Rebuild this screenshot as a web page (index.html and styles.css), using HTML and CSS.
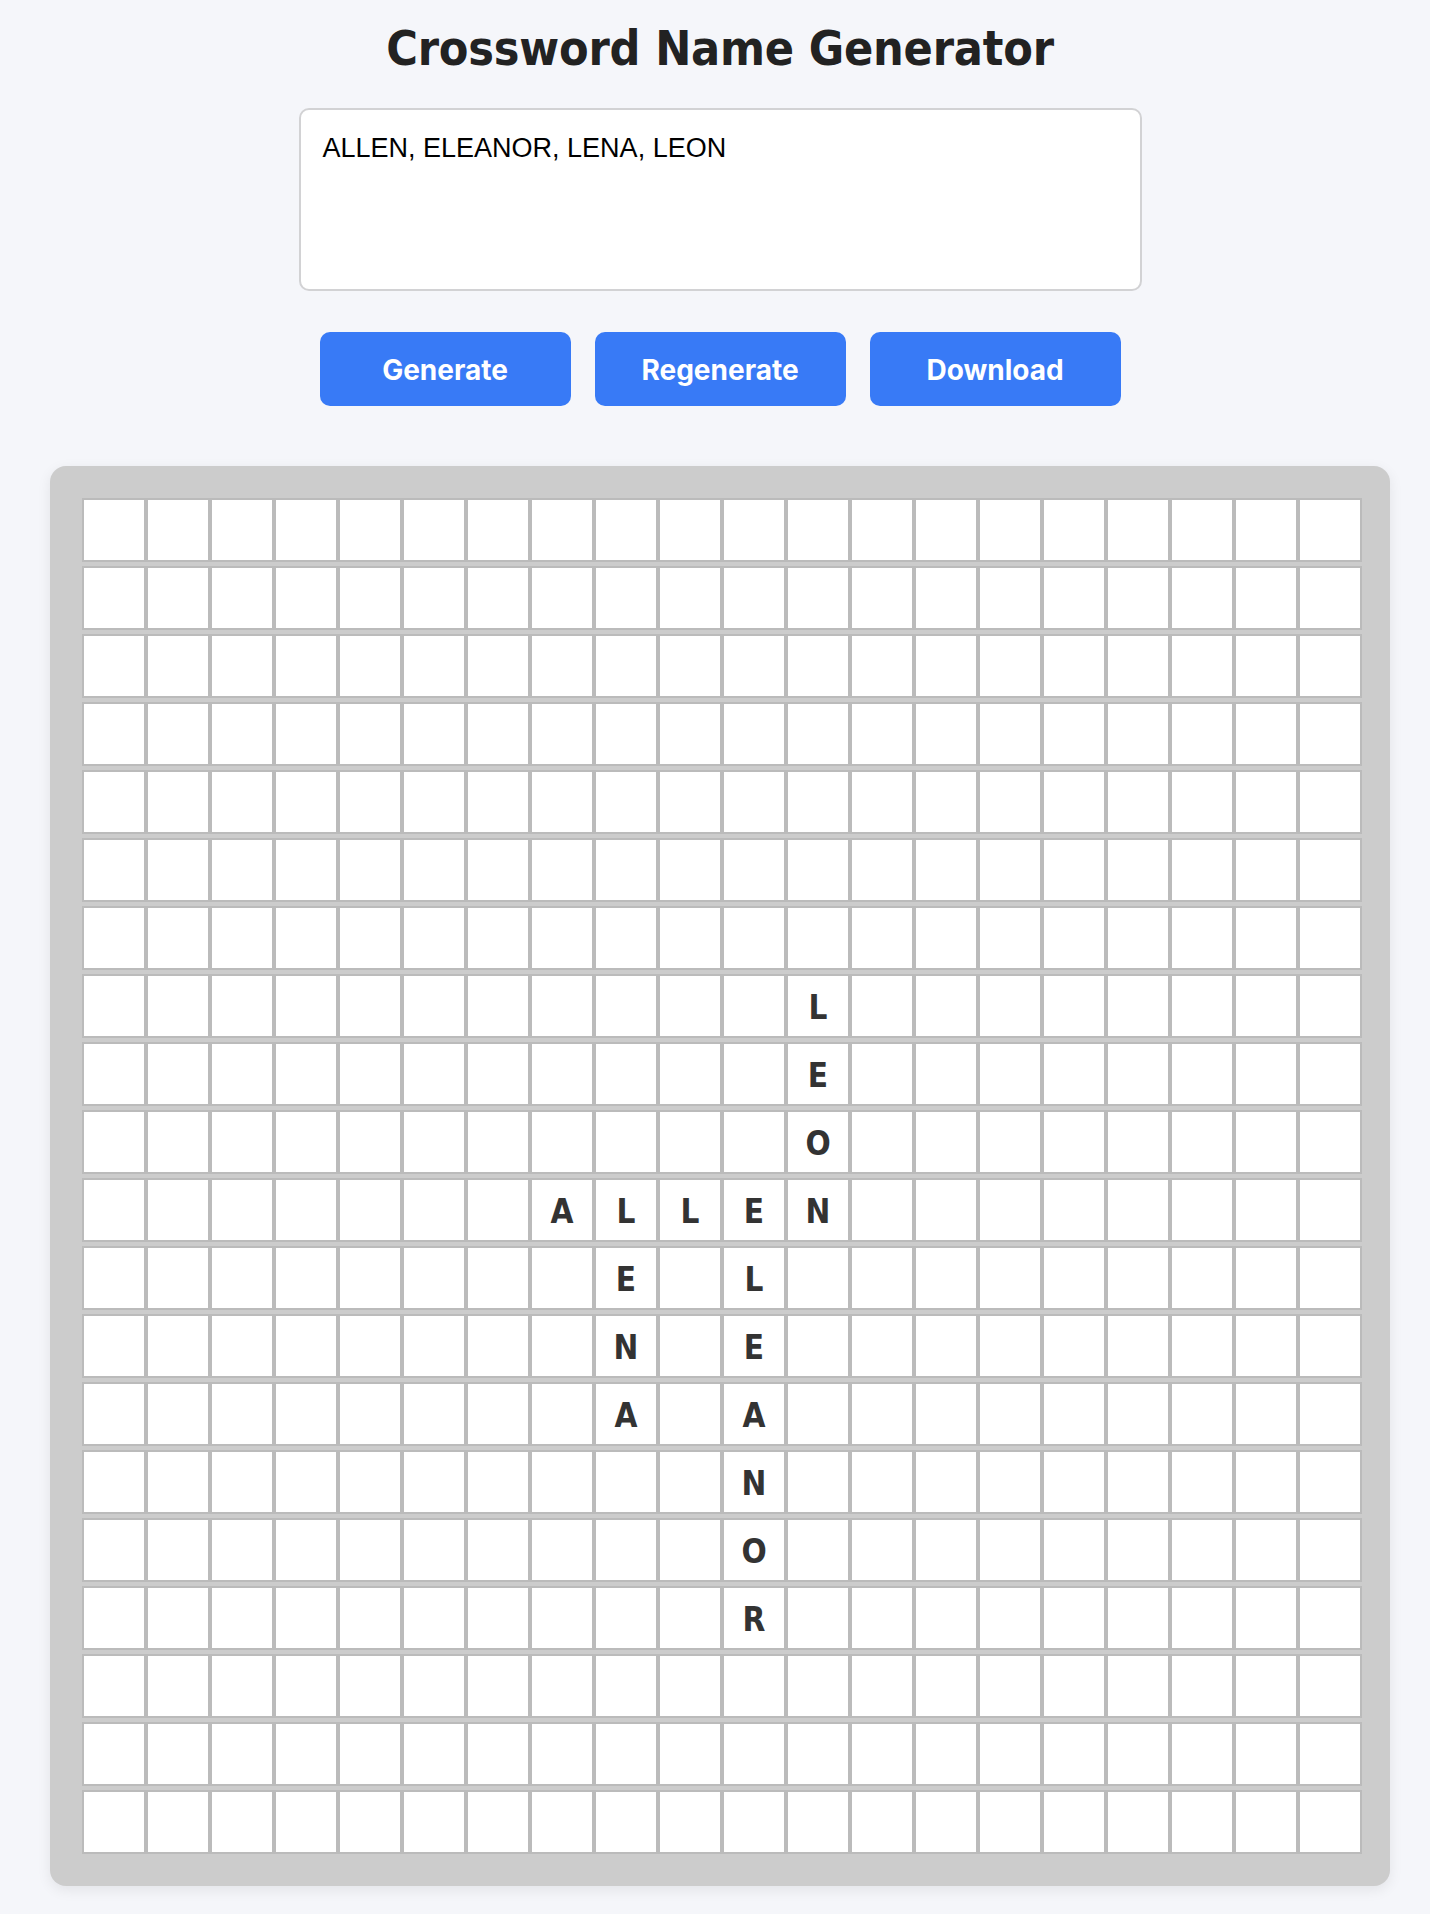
FILE: index.html
```html
<!DOCTYPE html>
<html lang="en">
<head>
<meta charset="utf-8">
<title>Crossword Name Generator</title>
<link rel="stylesheet" href="styles.css">
</head>
<body>
<main class="page">
  <h1 class="title">Crossword Name Generator</h1>
  <textarea class="names">ALLEN, ELEANOR, LENA, LEON</textarea>
  <div class="actions">
    <button class="btn">Generate</button>
    <button class="btn">Regenerate</button>
    <button class="btn">Download</button>
  </div>
  <section class="board">
    <div class="grid">
      <div class="row"><div class="c"></div><div class="c"></div><div class="c"></div><div class="c"></div><div class="c"></div><div class="c"></div><div class="c"></div><div class="c"></div><div class="c"></div><div class="c"></div><div class="c"></div><div class="c"></div><div class="c"></div><div class="c"></div><div class="c"></div><div class="c"></div><div class="c"></div><div class="c"></div><div class="c"></div><div class="c"></div></div>
      <div class="row"><div class="c"></div><div class="c"></div><div class="c"></div><div class="c"></div><div class="c"></div><div class="c"></div><div class="c"></div><div class="c"></div><div class="c"></div><div class="c"></div><div class="c"></div><div class="c"></div><div class="c"></div><div class="c"></div><div class="c"></div><div class="c"></div><div class="c"></div><div class="c"></div><div class="c"></div><div class="c"></div></div>
      <div class="row"><div class="c"></div><div class="c"></div><div class="c"></div><div class="c"></div><div class="c"></div><div class="c"></div><div class="c"></div><div class="c"></div><div class="c"></div><div class="c"></div><div class="c"></div><div class="c"></div><div class="c"></div><div class="c"></div><div class="c"></div><div class="c"></div><div class="c"></div><div class="c"></div><div class="c"></div><div class="c"></div></div>
      <div class="row"><div class="c"></div><div class="c"></div><div class="c"></div><div class="c"></div><div class="c"></div><div class="c"></div><div class="c"></div><div class="c"></div><div class="c"></div><div class="c"></div><div class="c"></div><div class="c"></div><div class="c"></div><div class="c"></div><div class="c"></div><div class="c"></div><div class="c"></div><div class="c"></div><div class="c"></div><div class="c"></div></div>
      <div class="row"><div class="c"></div><div class="c"></div><div class="c"></div><div class="c"></div><div class="c"></div><div class="c"></div><div class="c"></div><div class="c"></div><div class="c"></div><div class="c"></div><div class="c"></div><div class="c"></div><div class="c"></div><div class="c"></div><div class="c"></div><div class="c"></div><div class="c"></div><div class="c"></div><div class="c"></div><div class="c"></div></div>
      <div class="row"><div class="c"></div><div class="c"></div><div class="c"></div><div class="c"></div><div class="c"></div><div class="c"></div><div class="c"></div><div class="c"></div><div class="c"></div><div class="c"></div><div class="c"></div><div class="c"></div><div class="c"></div><div class="c"></div><div class="c"></div><div class="c"></div><div class="c"></div><div class="c"></div><div class="c"></div><div class="c"></div></div>
      <div class="row"><div class="c"></div><div class="c"></div><div class="c"></div><div class="c"></div><div class="c"></div><div class="c"></div><div class="c"></div><div class="c"></div><div class="c"></div><div class="c"></div><div class="c"></div><div class="c"></div><div class="c"></div><div class="c"></div><div class="c"></div><div class="c"></div><div class="c"></div><div class="c"></div><div class="c"></div><div class="c"></div></div>
      <div class="row"><div class="c"></div><div class="c"></div><div class="c"></div><div class="c"></div><div class="c"></div><div class="c"></div><div class="c"></div><div class="c"></div><div class="c"></div><div class="c"></div><div class="c"></div><div class="c">L</div><div class="c"></div><div class="c"></div><div class="c"></div><div class="c"></div><div class="c"></div><div class="c"></div><div class="c"></div><div class="c"></div></div>
      <div class="row"><div class="c"></div><div class="c"></div><div class="c"></div><div class="c"></div><div class="c"></div><div class="c"></div><div class="c"></div><div class="c"></div><div class="c"></div><div class="c"></div><div class="c"></div><div class="c">E</div><div class="c"></div><div class="c"></div><div class="c"></div><div class="c"></div><div class="c"></div><div class="c"></div><div class="c"></div><div class="c"></div></div>
      <div class="row"><div class="c"></div><div class="c"></div><div class="c"></div><div class="c"></div><div class="c"></div><div class="c"></div><div class="c"></div><div class="c"></div><div class="c"></div><div class="c"></div><div class="c"></div><div class="c">O</div><div class="c"></div><div class="c"></div><div class="c"></div><div class="c"></div><div class="c"></div><div class="c"></div><div class="c"></div><div class="c"></div></div>
      <div class="row"><div class="c"></div><div class="c"></div><div class="c"></div><div class="c"></div><div class="c"></div><div class="c"></div><div class="c"></div><div class="c">A</div><div class="c">L</div><div class="c">L</div><div class="c">E</div><div class="c">N</div><div class="c"></div><div class="c"></div><div class="c"></div><div class="c"></div><div class="c"></div><div class="c"></div><div class="c"></div><div class="c"></div></div>
      <div class="row"><div class="c"></div><div class="c"></div><div class="c"></div><div class="c"></div><div class="c"></div><div class="c"></div><div class="c"></div><div class="c"></div><div class="c">E</div><div class="c"></div><div class="c">L</div><div class="c"></div><div class="c"></div><div class="c"></div><div class="c"></div><div class="c"></div><div class="c"></div><div class="c"></div><div class="c"></div><div class="c"></div></div>
      <div class="row"><div class="c"></div><div class="c"></div><div class="c"></div><div class="c"></div><div class="c"></div><div class="c"></div><div class="c"></div><div class="c"></div><div class="c">N</div><div class="c"></div><div class="c">E</div><div class="c"></div><div class="c"></div><div class="c"></div><div class="c"></div><div class="c"></div><div class="c"></div><div class="c"></div><div class="c"></div><div class="c"></div></div>
      <div class="row"><div class="c"></div><div class="c"></div><div class="c"></div><div class="c"></div><div class="c"></div><div class="c"></div><div class="c"></div><div class="c"></div><div class="c">A</div><div class="c"></div><div class="c">A</div><div class="c"></div><div class="c"></div><div class="c"></div><div class="c"></div><div class="c"></div><div class="c"></div><div class="c"></div><div class="c"></div><div class="c"></div></div>
      <div class="row"><div class="c"></div><div class="c"></div><div class="c"></div><div class="c"></div><div class="c"></div><div class="c"></div><div class="c"></div><div class="c"></div><div class="c"></div><div class="c"></div><div class="c">N</div><div class="c"></div><div class="c"></div><div class="c"></div><div class="c"></div><div class="c"></div><div class="c"></div><div class="c"></div><div class="c"></div><div class="c"></div></div>
      <div class="row"><div class="c"></div><div class="c"></div><div class="c"></div><div class="c"></div><div class="c"></div><div class="c"></div><div class="c"></div><div class="c"></div><div class="c"></div><div class="c"></div><div class="c">O</div><div class="c"></div><div class="c"></div><div class="c"></div><div class="c"></div><div class="c"></div><div class="c"></div><div class="c"></div><div class="c"></div><div class="c"></div></div>
      <div class="row"><div class="c"></div><div class="c"></div><div class="c"></div><div class="c"></div><div class="c"></div><div class="c"></div><div class="c"></div><div class="c"></div><div class="c"></div><div class="c"></div><div class="c">R</div><div class="c"></div><div class="c"></div><div class="c"></div><div class="c"></div><div class="c"></div><div class="c"></div><div class="c"></div><div class="c"></div><div class="c"></div></div>
      <div class="row"><div class="c"></div><div class="c"></div><div class="c"></div><div class="c"></div><div class="c"></div><div class="c"></div><div class="c"></div><div class="c"></div><div class="c"></div><div class="c"></div><div class="c"></div><div class="c"></div><div class="c"></div><div class="c"></div><div class="c"></div><div class="c"></div><div class="c"></div><div class="c"></div><div class="c"></div><div class="c"></div></div>
      <div class="row"><div class="c"></div><div class="c"></div><div class="c"></div><div class="c"></div><div class="c"></div><div class="c"></div><div class="c"></div><div class="c"></div><div class="c"></div><div class="c"></div><div class="c"></div><div class="c"></div><div class="c"></div><div class="c"></div><div class="c"></div><div class="c"></div><div class="c"></div><div class="c"></div><div class="c"></div><div class="c"></div></div>
      <div class="row"><div class="c"></div><div class="c"></div><div class="c"></div><div class="c"></div><div class="c"></div><div class="c"></div><div class="c"></div><div class="c"></div><div class="c"></div><div class="c"></div><div class="c"></div><div class="c"></div><div class="c"></div><div class="c"></div><div class="c"></div><div class="c"></div><div class="c"></div><div class="c"></div><div class="c"></div><div class="c"></div></div>
    </div>
  </section>
</main>
</body>
</html>
```
FILE: styles.css
```css
html, body {
  margin: 0;
  padding: 0;
}
body {
  background: #f5f6fa;
  font-family: "DejaVu Sans", sans-serif;
}
.page {
  width: 1340px;
  margin-left: 50px;
  padding: 20px 0 28px;
  display: flex;
  flex-direction: column;
  align-items: center;
}
.title {
  margin: 0;
  font-family: "DejaVu Sans Condensed", "DejaVu Sans", sans-serif;
  font-weight: bold;
  font-size: 48px;
  line-height: 56px;
  letter-spacing: -0.2px;
  color: #222;
}
.names {
  box-sizing: border-box;
  width: 843px;
  height: 183px;
  margin-top: 32px;
  padding: 23px 22px 22px;
  border: 2px solid #d2d2d4;
  border-radius: 10px;
  background: #fff;
  font-family: "Liberation Sans", Arial, sans-serif;
  font-size: 27px;
  line-height: 31px;
  color: #000;
  resize: none;
  outline: none;
}
.actions {
  display: flex;
  gap: 24px;
  margin-top: 41px;
}
.btn {
  width: 251px;
  height: 74px;
  border: none;
  border-radius: 10px;
  background: #387af6;
  color: #fff;
  font-family: Inter, sans-serif;
  font-weight: 700;
  font-size: 28px;
  padding-top: 2px;
  cursor: pointer;
}
.board {
  box-sizing: border-box;
  width: 1340px;
  margin-top: 60px;
  padding: 32px 28px 32px 32px;
  background: #cccccc;
  border-radius: 16px;
  box-shadow: 0 4px 14px rgba(0, 0, 0, 0.08);
}
.grid {
  display: flex;
  flex-direction: column;
  gap: 4px;
}
.row {
  display: flex;
}
.c {
  box-sizing: border-box;
  width: 64px;
  height: 64px;
  border: 2px solid #bbbbbb;
  background: #fff;
  display: flex;
  align-items: center;
  justify-content: center;
  padding-top: 2px;
  font-family: "DejaVu Sans Condensed", "DejaVu Sans", sans-serif;
  font-weight: bold;
  font-size: 33px;
  color: #333;
}
```
